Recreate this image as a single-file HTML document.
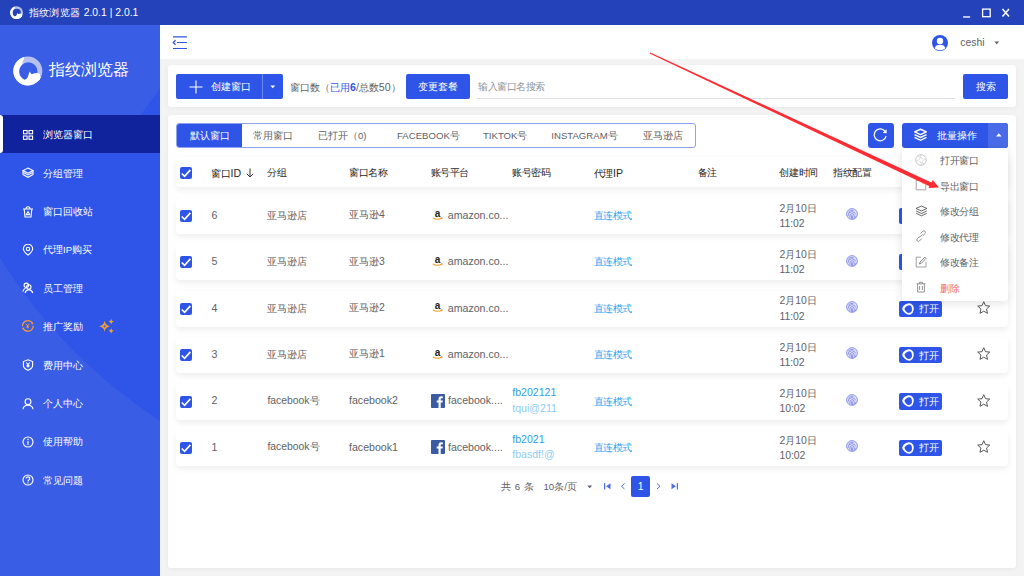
<!DOCTYPE html>
<html><head><meta charset="utf-8">
<style>
*{box-sizing:border-box;margin:0;padding:0}
html,body{width:1024px;height:576px;overflow:hidden}
body{position:relative;background:#f3f3f3;font-family:"Liberation Sans",sans-serif;font-size:9.6px;color:#606266}
.abs{position:absolute}
#title{left:0;top:0;width:1024px;height:25.4px;z-index:5;background:#2442b9;color:#fff}
#side{left:0;top:25px;width:160px;height:551px;background:#2e55e8;overflow:hidden}
#hdr{left:160px;top:25px;width:864px;height:34px;background:#fff}
.card{background:#fff;border-radius:3px;box-shadow:0 1px 4px rgba(0,0,0,0.05)}
.btn{background:#2e55e8;color:#fff;border-radius:2px}
.mi{position:absolute;left:0;width:160px;height:38.4px;color:#fff}
.mi .t{position:absolute;left:43px;top:1.3px;line-height:38.4px;font-size:9.6px}
.mi svg{position:absolute;left:22px;top:13.7px}
.row{position:absolute;left:176px;width:832px;height:36px;background:#fff;border-radius:4px;box-shadow:0 3px 6px rgba(0,0,0,0.07)}
.cell{position:absolute;top:0;line-height:36px;white-space:nowrap}
.cb{position:absolute;left:4px;top:12px;width:12px;height:12px;background:#2e55e8;border-radius:2px}
.th{font-weight:500;color:#262626;margin-top:0.8px;letter-spacing:-0.4px}
.link{color:#2a9fec;letter-spacing:-0.5px}
.l{font-size:10.6px;position:relative;top:-1.2px}
</style></head><body>

<div id="title" class="abs">
 <svg class="abs" style="left:9.9px;top:5.9px" width="13.3" height="13.3" viewBox="0 0 30 30">
  <circle cx="14.8" cy="15" r="14.5" fill="#b7c1ef"/>
  <path d="M11.3 0.93 A14.5 14.5 0 1 0 28.05 20.9 L20 19 L7.9 12.4Z" fill="#fff"/>
  <circle cx="15.3" cy="15.5" r="9.2" fill="#2442b9"/>
  <path d="M9.7 24.4 Q14 23.6 15 20.5 Q15.8 18 16.6 15.6 L18.6 18.3 Q21.5 17 24.5 17 L27 18 L27 24 L12 27Z" fill="#fff"/>
 </svg>
 <div class="abs" style="left:28.5px;top:0;line-height:25px;font-size:10.4px;color:#fff"><span style="letter-spacing:0.45px">指纹浏览器</span> 2.0.1 | 2.0.1</div>
 <svg class="abs" style="left:962px;top:7px" width="50" height="12" viewBox="0 0 50 12">
  <rect x="1.1" y="9.1" width="7" height="1.7" fill="#fff" opacity="0.8"/>
  <rect x="20.6" y="2.1" width="7.6" height="7.6" fill="none" stroke="#fff" stroke-width="1.3"/>
  <path d="M40.5 2 L47 9.5 M47 2 L40.5 9.5" stroke="#fff" stroke-width="1.5"/>
 </svg>
</div>

<div id="side" class="abs">
 <svg class="abs" style="left:0;top:0" width="160" height="551" viewBox="0 0 160 551">
  <path d="M0 0 H160 V64 Q135 95 118 128 L0 128Z" fill="#3a5de6"/>
  <path d="M0 233 Q60 330 160 396 V551 H0Z" fill="#3a5de6"/>
 </svg>
 <svg class="abs" style="left:12.5px;top:30.5px" width="30" height="30" viewBox="0 0 30 30">
  <circle cx="14.8" cy="15" r="14.5" fill="#b7c1ef"/>
  <path d="M11.3 0.93 A14.5 14.5 0 1 0 28.05 20.9 L20 19 L7.9 12.4Z" fill="#fff"/>
  <circle cx="15.3" cy="15.5" r="9.2" fill="#3a5de6"/>
  <path d="M9.7 24.4 Q14 23.6 15 20.5 Q15.8 18 16.6 15.6 L18.6 18.3 Q21.5 17 24.5 17 L27 18 L27 24 L12 27Z" fill="#fff"/>
 </svg>
 <div class="abs" style="left:49px;top:32px;line-height:25px;font-size:16px;color:#fff;letter-spacing:0px">指纹浏览器</div>
 <div class="abs" style="left:0;top:90px;width:160px;height:38px;background:#10229c"></div>
 <div class="abs" style="left:0;top:90px;width:3px;height:38px;background:#fff;border-radius:0 3px 3px 0"></div>
 <div class="mi" style="top:90.0px"><svg class="abs" style="left:22.3px;top:13.8px" width="12" height="12" viewBox="0 0 12 12"><rect x="1.5" y="1.5" width="3.6" height="3.3" stroke="#fff" fill="none" stroke-width="1.1" stroke-width="1.3"/><rect x="7" y="1.5" width="3.6" height="3.3" stroke="#fff" fill="none" stroke-width="1.1" stroke-width="1.3"/><rect x="1.5" y="7" width="3.6" height="3.3" stroke="#fff" fill="none" stroke-width="1.1" stroke-width="1.3"/><rect x="7" y="7" width="3.6" height="3.3" stroke="#fff" fill="none" stroke-width="1.1" stroke-width="1.3"/></svg><span class="t">浏览器窗口</span></div>
 <div class="mi" style="top:128.4px"><svg class="abs" style="left:22.3px;top:13.8px" width="12" height="12" viewBox="0 0 12 12"><path d="M6 1 L11 3.6 L6 6.2 L1 3.6Z" stroke="#fff" fill="none" stroke-width="1.1"/><path d="M1.3 5.6 L6 8 L10.7 5.6" stroke="#fff" fill="none" stroke-width="1.1"/><path d="M1.3 7.8 L6 10.3 L10.7 7.8" stroke="#fff" fill="none" stroke-width="1.1"/><path d="M1 3.6 L1 8 M11 3.6 L11 8" stroke="#fff" fill="none" stroke-width="1.1"/></svg><span class="t">分组管理</span></div>
 <div class="mi" style="top:166.8px"><svg class="abs" style="left:22.3px;top:13.8px" width="12" height="12" viewBox="0 0 12 12"><path d="M1 3 H11 M4 3 Q4 0.8 6 0.8 Q8 0.8 8 3 M2.2 3 L3 11 H9 L9.8 3" stroke="#fff" fill="none" stroke-width="1.1"/><path d="M4.3 8.6 L6 5.6 L7.7 8.6Z" stroke="#fff" fill="none" stroke-width="1.1" stroke-width="0.8"/></svg><span class="t">窗口回收站</span></div>
 <div class="mi" style="top:205.2px"><svg class="abs" style="left:22.3px;top:13.8px" width="12" height="12" viewBox="0 0 12 12"><path d="M6 11.2 Q1.3 7 1.3 4.9 A4.7 4.7 0 0 1 10.7 4.9 Q10.7 7 6 11.2Z" stroke="#fff" fill="none" stroke-width="1.1"/><circle cx="6" cy="4.9" r="1.7" stroke="#fff" fill="none" stroke-width="1.1"/></svg><span class="t">代理IP购买</span></div>
 <div class="mi" style="top:243.6px"><svg class="abs" style="left:22.3px;top:13.8px" width="12" height="12" viewBox="0 0 12 12"><circle cx="4.3" cy="3.3" r="2.2" stroke="#fff" fill="none" stroke-width="1.1"/><circle cx="6.8" cy="5" r="2.2" stroke="#fff" fill="none" stroke-width="1.1"/><path d="M0.8 9.5 Q2 6.5 3.5 6 M3 11 Q4.3 7.6 6.8 7.6 Q9.5 7.6 10.8 11" stroke="#fff" fill="none" stroke-width="1.1"/></svg><span class="t">员工管理</span></div>
 <div class="mi" style="top:282.0px"><svg class="abs" style="left:22.3px;top:13.2px" width="13" height="12" viewBox="0 0 13 12"><g stroke="#f29a38" fill="none" stroke-width="1.25" stroke-linecap="round"><path d="M0.5 5.6 A5.4 5.4 0 0 1 10.4 3.2"/><path d="M11.2 6.2 A5.4 5.4 0 0 1 1.1 8.4"/></g><circle cx="10.4" cy="3.4" r="0.9" fill="#f29a38"/><circle cx="1.1" cy="8.3" r="0.9" fill="#f29a38"/><path d="M4.1 3.8 L5.7 5.8 L7.3 3.8 M5.7 5.8 V8.3 M4.6 6.3 H6.8 M4.6 7.3 H6.8" stroke="#f29a38" fill="none" stroke-width="1"/></svg><span class="t">推广奖励</span></div>
 <div class="mi" style="top:320.4px"><svg class="abs" style="left:22.3px;top:13.8px" width="12" height="12" viewBox="0 0 12 12"><path d="M6 0.8 L10.6 2.6 V6.5 Q10.6 9.3 6 11.3 Q1.4 9.3 1.4 6.5 V2.6Z" stroke="#fff" fill="none" stroke-width="1.1"/><path d="M4.3 3.5 L6 5.5 L7.7 3.5 M6 5.5 V8.5 M4.6 6.2 H7.4 M4.6 7.3 H7.4" stroke="#fff" fill="none" stroke-width="1.1" stroke-width="0.8"/></svg><span class="t">费用中心</span></div>
 <div class="mi" style="top:358.8px"><svg class="abs" style="left:22.3px;top:13.8px" width="12" height="12" viewBox="0 0 12 12"><circle cx="6" cy="3.7" r="2.9" stroke="#fff" fill="none" stroke-width="1.1" stroke-width="1.3"/><path d="M1 11.3 Q1.3 7.2 6 7.2 Q10.7 7.2 11 11.3" stroke="#fff" fill="none" stroke-width="1.1" stroke-width="1.3"/></svg><span class="t">个人中心</span></div>
 <div class="mi" style="top:397.2px"><svg class="abs" style="left:22.3px;top:13.8px" width="12" height="12" viewBox="0 0 12 12"><circle cx="6" cy="6" r="5" stroke="#fff" fill="none" stroke-width="1.1"/><path d="M6 5 V9" stroke="#fff" fill="none" stroke-width="1.1" stroke-width="1.3"/><circle cx="6" cy="3.4" r="0.75" fill="#fff"/></svg><span class="t">使用帮助</span></div>
 <div class="mi" style="top:435.6px"><svg class="abs" style="left:22.3px;top:13.8px" width="12" height="12" viewBox="0 0 12 12"><circle cx="6" cy="6" r="5" stroke="#fff" fill="none" stroke-width="1.1"/><path d="M4.2 4.6 Q4.2 2.9 6 2.9 Q7.8 2.9 7.8 4.4 Q7.8 5.4 6.8 5.9 Q6 6.3 6 7.4" stroke="#fff" fill="none" stroke-width="1.1"/><circle cx="6" cy="8.9" r="0.7" fill="#fff"/></svg><span class="t">常见问题</span></div>
 <svg class="abs" style="left:99px;top:294px" width="15" height="15" viewBox="0 0 15 15">
  <path d="M5.6 1.8499999999999996 Q6.3999999999999995 6.45 11.0 7.25 Q6.3999999999999995 8.05 5.6 12.65 Q4.8 8.05 0.1999999999999993 7.25 Q4.8 6.45 5.6 1.8499999999999996Z M5.6 6.1 L6.75 7.25 L5.6 8.4 L4.45 7.25Z" fill="#f5a024" fill-rule="evenodd"/>
  <path d="M12.2 0.0 Q12.7 2.1 14.799999999999999 2.6 Q12.7 3.1 12.2 5.2 Q11.7 3.1 9.6 2.6 Q11.7 2.1 12.2 0.0Z" fill="#f5a024"/>
  <path d="M12.2 9.200000000000001 Q12.7 11.3 14.799999999999999 11.8 Q12.7 12.3 12.2 14.4 Q11.7 12.3 9.6 11.8 Q11.7 11.3 12.2 9.200000000000001Z" fill="#f5a024"/>
 </svg>
</div>

<div id="hdr" class="abs">
 <svg class="abs" style="left:12px;top:10px" width="16" height="14" viewBox="0 0 16 14">
  <path d="M1 1.9 H14.9 M5 7.5 H14.9 M1 13.5 H14.9" stroke="#2e55e8" stroke-width="1.2"/>
  <path d="M3.6 5.2 L1.2 7.5 L3.6 9.8" stroke="#2e55e8" stroke-width="1.2" fill="none"/>
 </svg>
 <svg class="abs" style="left:772px;top:9.6px" width="16" height="16" viewBox="0 0 16 16">
  <circle cx="8" cy="8" r="8" fill="#2e55e8"/>
  <circle cx="8" cy="6" r="3.2" fill="#fff"/>
  <path d="M2.6 13.2 Q3.5 9.8 8 9.8 Q12.5 9.8 13.4 13.2 Q11.2 15.2 8 15.2 Q4.8 15.2 2.6 13.2Z" fill="#fff"/>
 </svg>
 <div class="abs" style="left:800.3px;top:0;line-height:35px;font-size:10.4px;color:#606266">ceshi</div>
 <svg class="abs" style="left:834px;top:16px" width="6" height="4" viewBox="0 0 6 4"><path d="M0.3 0.5 H5.2 L2.75 3.3Z" fill="#606266"/></svg>
</div>

<div class="abs card" style="left:168px;top:65px;width:848px;height:42px"></div>
<div class="abs btn" style="left:176px;top:74px;width:106.5px;height:24.5px">
 <svg class="abs" style="left:12.5px;top:5.5px" width="14" height="14" viewBox="0 0 14 14"><path d="M7 0.5 V13.5 M0.5 7 H13.5" stroke="#fff" stroke-width="1.1"/></svg>
 <div class="abs" style="left:35px;top:0.6px;line-height:24.5px">创建窗口</div>
 <div class="abs" style="left:86.2px;top:0;width:1px;height:24.5px;background:rgba(255,255,255,0.3)"></div>
 <svg class="abs" style="left:94.3px;top:11.2px" width="6" height="4" viewBox="0 0 6 4"><path d="M0.3 0.5 H5.2 L2.75 3.3Z" fill="#fff"/></svg>
</div>
<div class="abs" style="left:290px;top:75px;line-height:24.5px;color:#606266">窗口数（<span style="color:#2e55e8;font-weight:500">已用<span style="font-size:10.6px;font-weight:bold">6</span></span><span style="font-size:10.6px">/</span>总数<span style="font-size:10.6px">50</span>）</div>
<div class="abs btn" style="left:406px;top:74px;width:63.5px;height:24.5px;text-align:center;line-height:25.5px">变更套餐</div>
<div class="abs" style="left:477px;top:74px;width:478px;height:24.5px;border-bottom:1px solid #dcdfe6;line-height:25.5px;color:#909399;letter-spacing:-0.45px;padding-left:1px">输入窗口名搜索</div>
<div class="abs btn" style="left:963px;top:74px;width:45px;height:24.5px;text-align:center;line-height:25.5px">搜索</div>
<div class="abs card" style="left:168px;top:115px;width:848px;height:453px"></div>
<div class="abs" style="left:176px;top:123.3px;width:519.5px;height:24.4px;border:1px solid #8ea2f0;border-radius:3px;overflow:hidden">
 <div class="abs" style="left:-1px;top:-1px;width:66px;height:24px;background:#2e55e8"></div>
 <div class="abs" style="left:12.699999999999989px;top:0px;line-height:24px;color:#fff">默认窗口</div>
 <div class="abs" style="left:76px;top:0px;line-height:24px;color:#606266">常用窗口</div>
 <div class="abs" style="left:141px;top:0px;line-height:24px;color:#606266">已打开（0)</div>
 <div class="abs" style="left:220px;top:0px;line-height:24px;color:#606266">FACEBOOK号</div>
 <div class="abs" style="left:306px;top:0px;line-height:24px;color:#606266">TIKTOK号</div>
 <div class="abs" style="left:374.29999999999995px;top:0px;line-height:24px;color:#606266">INSTAGRAM号</div>
 <div class="abs" style="left:466.4px;top:0px;line-height:24px;color:#606266">亚马逊店</div>
</div>
<div class="abs btn" style="left:868px;top:123.3px;width:25.7px;height:24.4px;border-radius:3px">
 <svg class="abs" style="left:5.3px;top:4.2px" width="15" height="15" viewBox="0 0 15 15"><path d="M12.3 4.6 A6 6 0 1 0 13.1 9.2" stroke="#fff" stroke-width="1.25" fill="none"/><path d="M13.6 2.2 L13.6 6.3 L9.6 6.1Z" fill="#fff"/></svg>
</div>
<div class="abs btn" style="left:902px;top:123.3px;width:106px;height:24.4px;border-radius:3px;overflow:hidden">
 <svg class="abs" style="left:10.8px;top:4.6px" width="15" height="14" viewBox="0 0 15 14"><path d="M7.5 1.2 L13.3 3.9 L7.5 6.6 L1.7 3.9Z" fill="none" stroke="#fff" stroke-width="1.5" stroke-linejoin="round"/><path d="M1.5 6.6 L7.5 9.5 L13.5 6.6" stroke="#fff" stroke-width="1.4" fill="none"/><path d="M1.5 9.4 L7.5 12.3 L13.5 9.4" stroke="#fff" stroke-width="1.4" fill="none"/></svg>
 <div class="abs" style="left:34.6px;top:1px;line-height:24.2px">批量操作</div>
 <div class="abs" style="left:86px;top:0;width:20px;height:24.4px;background:#4a6be8"></div>
 <svg class="abs" style="left:93.6px;top:10.2px" width="6" height="4" viewBox="0 0 6 4"><path d="M0 3.5 H5.6 L2.8 0.2Z" fill="#fff"/></svg>
</div>
<div class="row" style="top:157px;height:30.4px"><div class="cb" style="top:10.2px;left:4px"><svg width="12" height="12" viewBox="0 0 12 12"><path d="M1.7 6.5 L4.6 9.4 L10.4 2.9" stroke="#fff" stroke-width="1.6" fill="none"/></svg></div><div class="cell th" style="left:35.400000000000006px;line-height:30.4px">窗口<span style="font-size:10.6px;letter-spacing:0">ID</span> <svg style="vertical-align:-1px;margin-left:2.5px" width="8" height="10" viewBox="0 0 8 10"><path d="M4 0.5 V9 M0.8 5.8 L4 9 L7.2 5.8" stroke="#333" stroke-width="1" fill="none"/></svg></div><div class="cell th" style="left:91.39999999999998px;line-height:30.4px">分组</div><div class="cell th" style="left:173px;line-height:30.4px">窗口名称</div><div class="cell th" style="left:254.60000000000002px;line-height:30.4px">账号平台</div><div class="cell th" style="left:336.20000000000005px;line-height:30.4px">账号密码</div><div class="cell th" style="left:417.79999999999995px;line-height:30.4px">代理<span style="font-size:10.6px;letter-spacing:0">IP</span></div><div class="cell th" style="left:521.6px;line-height:30.4px">备注</div><div class="cell th" style="left:603.4px;line-height:30.4px">创建时间</div><div class="cell th" style="left:657px;line-height:30.4px">指纹配置</div></div>
<div class="row" style="top:198.0px"><div class="cb" style="left:4px"><svg width="12" height="12" viewBox="0 0 12 12"><path d="M1.7 6.5 L4.6 9.4 L10.4 2.9" stroke="#fff" stroke-width="1.6" fill="none"/></svg></div><div class="cell" style="left:35.4px"><span class="l">6</span></div><div class="cell" style="left:91.4px">亚马逊店</div><div class="cell" style="left:173px;font-size:10px;top:-0.8px">亚马逊<span style="font-size:10.4px">4</span></div><svg class="abs" style="left:256.3px;top:9.6px" width="11" height="13" viewBox="0 0 11 13"><text x="5.5" y="8.5" text-anchor="middle" font-family="Liberation Sans" font-weight="bold" font-size="10" fill="#222">a</text><path d="M1 10 Q5.5 12.5 10 10" stroke="#f39a1e" stroke-width="1.2" fill="none"/><path d="M8.6 9.2 L10.3 9.8 L9.6 11.3" stroke="#f39a1e" stroke-width="0.8" fill="none"/></svg><div class="cell" style="left:271.8px"><span class="l">amazon.co...</span></div><div class="cell link" style="left:417.8px">直连模式</div><div class="abs" style="left:603.4px;top:2.6px;line-height:15.2px;font-size:10.4px;white-space:nowrap">2月10日<br>11:02</div><svg class="abs" style="left:669.6px;top:10.2px" width="12" height="12" viewBox="0 0 12 12"><circle cx="6" cy="6" r="5.4" fill="#dfe2fb" stroke="#858cec" stroke-width="0.9"/><g stroke="#7a82ea" stroke-width="0.8" fill="none"><path d="M2.3 4 Q4.5 1.8 7.5 2.3"/><path d="M2 7.8 Q2.2 4.2 5.5 3.7 Q8.8 3.5 9.8 6.5"/><path d="M3.8 10 Q3.3 6 5.8 5.6 Q8 5.4 8.2 8 Q8.3 9.5 7.8 10.8"/><path d="M5.8 11 Q5.2 8.5 5.9 7.3 Q6.6 8.5 6.4 11"/><path d="M9.8 8.2 Q9.7 9.3 9.2 10"/></g></svg><div class="abs btn" style="left:722.6px;top:9.8px;width:43.3px;height:16.3px;border-radius:2px"><svg class="abs" style="left:3.6px;top:2.1px" width="12" height="12" viewBox="0 0 12 12"><path d="M6.5 0.3 Q9 0 11 2.5 Q12.2 4.5 11.5 7.5 Q10.8 11 8.5 11.6 Q5.5 12.2 2.5 9.5 Q0 7.3 0.2 5.5 Q0.8 2.5 3.5 1.2Z" fill="#fff"/><path d="M2.6 5.6 Q3.3 3.6 6 2.6 Q8.3 1.9 9.2 3.3 Q10.2 5 9.9 7.2 Q9.5 9.4 7.8 9.8 Q6 10.2 4.2 8.7 Q2.3 7 2.6 5.6Z" fill="#2e55e8"/></svg><div class="abs" style="left:20px;top:0.7px;line-height:16.3px">打开</div></div><svg class="abs" style="left:801px;top:10.2px" width="13.5" height="13.5" viewBox="0 0 13 13"><path d="M6.5 0.7 L8.2 4.5 L12.3 4.9 L9.2 7.7 L10.1 11.9 L6.5 9.8 L2.9 11.9 L3.8 7.7 L0.7 4.9 L4.8 4.5Z" stroke="#555" stroke-width="0.95" fill="none" stroke-linejoin="round"/></svg></div>
<div class="row" style="top:244.4px"><div class="cb" style="left:4px"><svg width="12" height="12" viewBox="0 0 12 12"><path d="M1.7 6.5 L4.6 9.4 L10.4 2.9" stroke="#fff" stroke-width="1.6" fill="none"/></svg></div><div class="cell" style="left:35.4px"><span class="l">5</span></div><div class="cell" style="left:91.4px">亚马逊店</div><div class="cell" style="left:173px;font-size:10px;top:-0.8px">亚马逊<span style="font-size:10.4px">3</span></div><svg class="abs" style="left:256.3px;top:9.6px" width="11" height="13" viewBox="0 0 11 13"><text x="5.5" y="8.5" text-anchor="middle" font-family="Liberation Sans" font-weight="bold" font-size="10" fill="#222">a</text><path d="M1 10 Q5.5 12.5 10 10" stroke="#f39a1e" stroke-width="1.2" fill="none"/><path d="M8.6 9.2 L10.3 9.8 L9.6 11.3" stroke="#f39a1e" stroke-width="0.8" fill="none"/></svg><div class="cell" style="left:271.8px"><span class="l">amazon.co...</span></div><div class="cell link" style="left:417.8px">直连模式</div><div class="abs" style="left:603.4px;top:2.6px;line-height:15.2px;font-size:10.4px;white-space:nowrap">2月10日<br>11:02</div><svg class="abs" style="left:669.6px;top:10.2px" width="12" height="12" viewBox="0 0 12 12"><circle cx="6" cy="6" r="5.4" fill="#dfe2fb" stroke="#858cec" stroke-width="0.9"/><g stroke="#7a82ea" stroke-width="0.8" fill="none"><path d="M2.3 4 Q4.5 1.8 7.5 2.3"/><path d="M2 7.8 Q2.2 4.2 5.5 3.7 Q8.8 3.5 9.8 6.5"/><path d="M3.8 10 Q3.3 6 5.8 5.6 Q8 5.4 8.2 8 Q8.3 9.5 7.8 10.8"/><path d="M5.8 11 Q5.2 8.5 5.9 7.3 Q6.6 8.5 6.4 11"/><path d="M9.8 8.2 Q9.7 9.3 9.2 10"/></g></svg><div class="abs btn" style="left:722.6px;top:9.8px;width:43.3px;height:16.3px;border-radius:2px"><svg class="abs" style="left:3.6px;top:2.1px" width="12" height="12" viewBox="0 0 12 12"><path d="M6.5 0.3 Q9 0 11 2.5 Q12.2 4.5 11.5 7.5 Q10.8 11 8.5 11.6 Q5.5 12.2 2.5 9.5 Q0 7.3 0.2 5.5 Q0.8 2.5 3.5 1.2Z" fill="#fff"/><path d="M2.6 5.6 Q3.3 3.6 6 2.6 Q8.3 1.9 9.2 3.3 Q10.2 5 9.9 7.2 Q9.5 9.4 7.8 9.8 Q6 10.2 4.2 8.7 Q2.3 7 2.6 5.6Z" fill="#2e55e8"/></svg><div class="abs" style="left:20px;top:0.7px;line-height:16.3px">打开</div></div><svg class="abs" style="left:801px;top:10.2px" width="13.5" height="13.5" viewBox="0 0 13 13"><path d="M6.5 0.7 L8.2 4.5 L12.3 4.9 L9.2 7.7 L10.1 11.9 L6.5 9.8 L2.9 11.9 L3.8 7.7 L0.7 4.9 L4.8 4.5Z" stroke="#555" stroke-width="0.95" fill="none" stroke-linejoin="round"/></svg></div>
<div class="row" style="top:290.8px"><div class="cb" style="left:4px"><svg width="12" height="12" viewBox="0 0 12 12"><path d="M1.7 6.5 L4.6 9.4 L10.4 2.9" stroke="#fff" stroke-width="1.6" fill="none"/></svg></div><div class="cell" style="left:35.4px"><span class="l">4</span></div><div class="cell" style="left:91.4px">亚马逊店</div><div class="cell" style="left:173px;font-size:10px;top:-0.8px">亚马逊<span style="font-size:10.4px">2</span></div><svg class="abs" style="left:256.3px;top:9.6px" width="11" height="13" viewBox="0 0 11 13"><text x="5.5" y="8.5" text-anchor="middle" font-family="Liberation Sans" font-weight="bold" font-size="10" fill="#222">a</text><path d="M1 10 Q5.5 12.5 10 10" stroke="#f39a1e" stroke-width="1.2" fill="none"/><path d="M8.6 9.2 L10.3 9.8 L9.6 11.3" stroke="#f39a1e" stroke-width="0.8" fill="none"/></svg><div class="cell" style="left:271.8px"><span class="l">amazon.co...</span></div><div class="cell link" style="left:417.8px">直连模式</div><div class="abs" style="left:603.4px;top:2.6px;line-height:15.2px;font-size:10.4px;white-space:nowrap">2月10日<br>11:02</div><svg class="abs" style="left:669.6px;top:10.2px" width="12" height="12" viewBox="0 0 12 12"><circle cx="6" cy="6" r="5.4" fill="#dfe2fb" stroke="#858cec" stroke-width="0.9"/><g stroke="#7a82ea" stroke-width="0.8" fill="none"><path d="M2.3 4 Q4.5 1.8 7.5 2.3"/><path d="M2 7.8 Q2.2 4.2 5.5 3.7 Q8.8 3.5 9.8 6.5"/><path d="M3.8 10 Q3.3 6 5.8 5.6 Q8 5.4 8.2 8 Q8.3 9.5 7.8 10.8"/><path d="M5.8 11 Q5.2 8.5 5.9 7.3 Q6.6 8.5 6.4 11"/><path d="M9.8 8.2 Q9.7 9.3 9.2 10"/></g></svg><div class="abs btn" style="left:722.6px;top:9.8px;width:43.3px;height:16.3px;border-radius:2px"><svg class="abs" style="left:3.6px;top:2.1px" width="12" height="12" viewBox="0 0 12 12"><path d="M6.5 0.3 Q9 0 11 2.5 Q12.2 4.5 11.5 7.5 Q10.8 11 8.5 11.6 Q5.5 12.2 2.5 9.5 Q0 7.3 0.2 5.5 Q0.8 2.5 3.5 1.2Z" fill="#fff"/><path d="M2.6 5.6 Q3.3 3.6 6 2.6 Q8.3 1.9 9.2 3.3 Q10.2 5 9.9 7.2 Q9.5 9.4 7.8 9.8 Q6 10.2 4.2 8.7 Q2.3 7 2.6 5.6Z" fill="#2e55e8"/></svg><div class="abs" style="left:20px;top:0.7px;line-height:16.3px">打开</div></div><svg class="abs" style="left:801px;top:10.2px" width="13.5" height="13.5" viewBox="0 0 13 13"><path d="M6.5 0.7 L8.2 4.5 L12.3 4.9 L9.2 7.7 L10.1 11.9 L6.5 9.8 L2.9 11.9 L3.8 7.7 L0.7 4.9 L4.8 4.5Z" stroke="#555" stroke-width="0.95" fill="none" stroke-linejoin="round"/></svg></div>
<div class="row" style="top:337.2px"><div class="cb" style="left:4px"><svg width="12" height="12" viewBox="0 0 12 12"><path d="M1.7 6.5 L4.6 9.4 L10.4 2.9" stroke="#fff" stroke-width="1.6" fill="none"/></svg></div><div class="cell" style="left:35.4px"><span class="l">3</span></div><div class="cell" style="left:91.4px">亚马逊店</div><div class="cell" style="left:173px;font-size:10px;top:-0.8px">亚马逊<span style="font-size:10.4px">1</span></div><svg class="abs" style="left:256.3px;top:9.6px" width="11" height="13" viewBox="0 0 11 13"><text x="5.5" y="8.5" text-anchor="middle" font-family="Liberation Sans" font-weight="bold" font-size="10" fill="#222">a</text><path d="M1 10 Q5.5 12.5 10 10" stroke="#f39a1e" stroke-width="1.2" fill="none"/><path d="M8.6 9.2 L10.3 9.8 L9.6 11.3" stroke="#f39a1e" stroke-width="0.8" fill="none"/></svg><div class="cell" style="left:271.8px"><span class="l">amazon.co...</span></div><div class="cell link" style="left:417.8px">直连模式</div><div class="abs" style="left:603.4px;top:2.6px;line-height:15.2px;font-size:10.4px;white-space:nowrap">2月10日<br>11:02</div><svg class="abs" style="left:669.6px;top:10.2px" width="12" height="12" viewBox="0 0 12 12"><circle cx="6" cy="6" r="5.4" fill="#dfe2fb" stroke="#858cec" stroke-width="0.9"/><g stroke="#7a82ea" stroke-width="0.8" fill="none"><path d="M2.3 4 Q4.5 1.8 7.5 2.3"/><path d="M2 7.8 Q2.2 4.2 5.5 3.7 Q8.8 3.5 9.8 6.5"/><path d="M3.8 10 Q3.3 6 5.8 5.6 Q8 5.4 8.2 8 Q8.3 9.5 7.8 10.8"/><path d="M5.8 11 Q5.2 8.5 5.9 7.3 Q6.6 8.5 6.4 11"/><path d="M9.8 8.2 Q9.7 9.3 9.2 10"/></g></svg><div class="abs btn" style="left:722.6px;top:9.8px;width:43.3px;height:16.3px;border-radius:2px"><svg class="abs" style="left:3.6px;top:2.1px" width="12" height="12" viewBox="0 0 12 12"><path d="M6.5 0.3 Q9 0 11 2.5 Q12.2 4.5 11.5 7.5 Q10.8 11 8.5 11.6 Q5.5 12.2 2.5 9.5 Q0 7.3 0.2 5.5 Q0.8 2.5 3.5 1.2Z" fill="#fff"/><path d="M2.6 5.6 Q3.3 3.6 6 2.6 Q8.3 1.9 9.2 3.3 Q10.2 5 9.9 7.2 Q9.5 9.4 7.8 9.8 Q6 10.2 4.2 8.7 Q2.3 7 2.6 5.6Z" fill="#2e55e8"/></svg><div class="abs" style="left:20px;top:0.7px;line-height:16.3px">打开</div></div><svg class="abs" style="left:801px;top:10.2px" width="13.5" height="13.5" viewBox="0 0 13 13"><path d="M6.5 0.7 L8.2 4.5 L12.3 4.9 L9.2 7.7 L10.1 11.9 L6.5 9.8 L2.9 11.9 L3.8 7.7 L0.7 4.9 L4.8 4.5Z" stroke="#555" stroke-width="0.95" fill="none" stroke-linejoin="round"/></svg></div>
<div class="row" style="top:383.6px"><div class="cb" style="left:4px"><svg width="12" height="12" viewBox="0 0 12 12"><path d="M1.7 6.5 L4.6 9.4 L10.4 2.9" stroke="#fff" stroke-width="1.6" fill="none"/></svg></div><div class="cell" style="left:35.4px"><span class="l">2</span></div><div class="cell" style="left:91.4px;font-size:10.4px;top:-0.8px">facebook号</div><div class="cell" style="left:173px"><span class="l">facebook2</span></div><svg class="abs" style="left:254.6px;top:10px" width="14" height="14" viewBox="0 0 14 14"><rect width="14" height="14" rx="1" fill="#3a5aa2"/><path d="M9.7 14 V8.6 H11.5 L11.8 6.5 H9.7 V5.2 Q9.7 4.3 10.6 4.3 H11.9 V2.4 Q11.2 2.3 10.2 2.3 Q7.5 2.3 7.5 5 V6.5 H5.7 V8.6 H7.5 V14Z" fill="#fff"/></svg><div class="cell" style="left:272px"><span class="l">facebook....</span></div><div class="abs" style="left:336.2px;top:3px;line-height:14.4px;white-space:nowrap"><div style="color:#2d9fe8"><span class="l">fb202121</span></div><div style="color:#90cdf2"><span class="l">tqui@211</span></div></div><div class="cell link" style="left:417.8px">直连模式</div><div class="abs" style="left:603.4px;top:2.6px;line-height:15.2px;font-size:10.4px;white-space:nowrap">2月10日<br>10:02</div><svg class="abs" style="left:669.6px;top:10.2px" width="12" height="12" viewBox="0 0 12 12"><circle cx="6" cy="6" r="5.4" fill="#dfe2fb" stroke="#858cec" stroke-width="0.9"/><g stroke="#7a82ea" stroke-width="0.8" fill="none"><path d="M2.3 4 Q4.5 1.8 7.5 2.3"/><path d="M2 7.8 Q2.2 4.2 5.5 3.7 Q8.8 3.5 9.8 6.5"/><path d="M3.8 10 Q3.3 6 5.8 5.6 Q8 5.4 8.2 8 Q8.3 9.5 7.8 10.8"/><path d="M5.8 11 Q5.2 8.5 5.9 7.3 Q6.6 8.5 6.4 11"/><path d="M9.8 8.2 Q9.7 9.3 9.2 10"/></g></svg><div class="abs btn" style="left:722.6px;top:9.8px;width:43.3px;height:16.3px;border-radius:2px"><svg class="abs" style="left:3.6px;top:2.1px" width="12" height="12" viewBox="0 0 12 12"><path d="M6.5 0.3 Q9 0 11 2.5 Q12.2 4.5 11.5 7.5 Q10.8 11 8.5 11.6 Q5.5 12.2 2.5 9.5 Q0 7.3 0.2 5.5 Q0.8 2.5 3.5 1.2Z" fill="#fff"/><path d="M2.6 5.6 Q3.3 3.6 6 2.6 Q8.3 1.9 9.2 3.3 Q10.2 5 9.9 7.2 Q9.5 9.4 7.8 9.8 Q6 10.2 4.2 8.7 Q2.3 7 2.6 5.6Z" fill="#2e55e8"/></svg><div class="abs" style="left:20px;top:0.7px;line-height:16.3px">打开</div></div><svg class="abs" style="left:801px;top:10.2px" width="13.5" height="13.5" viewBox="0 0 13 13"><path d="M6.5 0.7 L8.2 4.5 L12.3 4.9 L9.2 7.7 L10.1 11.9 L6.5 9.8 L2.9 11.9 L3.8 7.7 L0.7 4.9 L4.8 4.5Z" stroke="#555" stroke-width="0.95" fill="none" stroke-linejoin="round"/></svg></div>
<div class="row" style="top:430.0px"><div class="cb" style="left:4px"><svg width="12" height="12" viewBox="0 0 12 12"><path d="M1.7 6.5 L4.6 9.4 L10.4 2.9" stroke="#fff" stroke-width="1.6" fill="none"/></svg></div><div class="cell" style="left:35.4px"><span class="l">1</span></div><div class="cell" style="left:91.4px;font-size:10.4px;top:-0.8px">facebook号</div><div class="cell" style="left:173px"><span class="l">facebook1</span></div><svg class="abs" style="left:254.6px;top:10px" width="14" height="14" viewBox="0 0 14 14"><rect width="14" height="14" rx="1" fill="#3a5aa2"/><path d="M9.7 14 V8.6 H11.5 L11.8 6.5 H9.7 V5.2 Q9.7 4.3 10.6 4.3 H11.9 V2.4 Q11.2 2.3 10.2 2.3 Q7.5 2.3 7.5 5 V6.5 H5.7 V8.6 H7.5 V14Z" fill="#fff"/></svg><div class="cell" style="left:272px"><span class="l">facebook....</span></div><div class="abs" style="left:336.2px;top:3px;line-height:14.4px;white-space:nowrap"><div style="color:#2d9fe8"><span class="l">fb2021</span></div><div style="color:#90cdf2"><span class="l">fbasdf!@</span></div></div><div class="cell link" style="left:417.8px">直连模式</div><div class="abs" style="left:603.4px;top:2.6px;line-height:15.2px;font-size:10.4px;white-space:nowrap">2月10日<br>10:02</div><svg class="abs" style="left:669.6px;top:10.2px" width="12" height="12" viewBox="0 0 12 12"><circle cx="6" cy="6" r="5.4" fill="#dfe2fb" stroke="#858cec" stroke-width="0.9"/><g stroke="#7a82ea" stroke-width="0.8" fill="none"><path d="M2.3 4 Q4.5 1.8 7.5 2.3"/><path d="M2 7.8 Q2.2 4.2 5.5 3.7 Q8.8 3.5 9.8 6.5"/><path d="M3.8 10 Q3.3 6 5.8 5.6 Q8 5.4 8.2 8 Q8.3 9.5 7.8 10.8"/><path d="M5.8 11 Q5.2 8.5 5.9 7.3 Q6.6 8.5 6.4 11"/><path d="M9.8 8.2 Q9.7 9.3 9.2 10"/></g></svg><div class="abs btn" style="left:722.6px;top:9.8px;width:43.3px;height:16.3px;border-radius:2px"><svg class="abs" style="left:3.6px;top:2.1px" width="12" height="12" viewBox="0 0 12 12"><path d="M6.5 0.3 Q9 0 11 2.5 Q12.2 4.5 11.5 7.5 Q10.8 11 8.5 11.6 Q5.5 12.2 2.5 9.5 Q0 7.3 0.2 5.5 Q0.8 2.5 3.5 1.2Z" fill="#fff"/><path d="M2.6 5.6 Q3.3 3.6 6 2.6 Q8.3 1.9 9.2 3.3 Q10.2 5 9.9 7.2 Q9.5 9.4 7.8 9.8 Q6 10.2 4.2 8.7 Q2.3 7 2.6 5.6Z" fill="#2e55e8"/></svg><div class="abs" style="left:20px;top:0.7px;line-height:16.3px">打开</div></div><svg class="abs" style="left:801px;top:10.2px" width="13.5" height="13.5" viewBox="0 0 13 13"><path d="M6.5 0.7 L8.2 4.5 L12.3 4.9 L9.2 7.7 L10.1 11.9 L6.5 9.8 L2.9 11.9 L3.8 7.7 L0.7 4.9 L4.8 4.5Z" stroke="#555" stroke-width="0.95" fill="none" stroke-linejoin="round"/></svg></div>
<div class="abs" style="left:501px;top:476px;line-height:21px;color:#606266;word-spacing:1px">共 6 条</div>
<div class="abs" style="left:543.5px;top:476px;line-height:21px;color:#606266">10条/页</div>
<svg class="abs" style="left:587px;top:484.5px" width="6" height="4" viewBox="0 0 6 4"><path d="M0.3 0.5 H5.2 L2.75 3.3Z" fill="#606266"/></svg>
<svg class="abs" style="left:603px;top:482px" width="80" height="9" viewBox="0 0 80 9">
 <g fill="#2e55e8" opacity="0.85"><rect x="1" y="1" width="1.2" height="6.5"/><path d="M7.5 1.2 V7.3 L3 4.25Z"/></g>
 <path d="M21.5 1.5 L18.5 4.25 L21.5 7" stroke="#2e55e8" stroke-width="1" fill="none" opacity="0.85"/>
 <path d="M54 1.5 L57 4.25 L54 7" stroke="#2e55e8" stroke-width="1" fill="none" opacity="0.85"/>
 <g fill="#2e55e8" opacity="0.85"><rect x="73.8" y="1" width="1.2" height="6.5"/><path d="M68.5 1.2 V7.3 L73 4.25Z"/></g>
</svg>
<div class="abs btn" style="left:631.2px;top:476px;width:19px;height:21px;border-radius:2px;text-align:center;line-height:21px;font-size:10.4px">1</div>
<div class="abs" style="left:902px;top:148px;width:106px;height:153px;background:#fff;border-radius:3px;box-shadow:0 2px 10px rgba(0,0,0,0.12)">
 <div class="abs" style="left:38px;top:5.0px;line-height:16px;color:#606266;letter-spacing:-0.35px">打开窗口</div>
 <svg class="abs" style="left:13px;top:5.9px" width="12" height="12" viewBox="0 0 12 12"><circle cx="6" cy="6" r="5.3" stroke="#bbb" stroke-width="0.8" fill="none"/><g stroke="#ccc" stroke-width="0.6"><path d="M6 0.7 L4 6 M11.3 6 L6 4 M6 11.3 L8 6 M0.7 6 L6 8 M2.3 2.3 L7 3.5 M9.7 9.7 L5 8.5"/></g></svg>
 <div class="abs" style="left:38px;top:30.5px;line-height:16px;color:#606266;letter-spacing:-0.35px">导出窗口</div>
 <svg class="abs" style="left:13px;top:31.4px" width="12" height="12" viewBox="0 0 12 12"><path d="M6.5 1.5 H1.2 V10.8 H10.8 V5.5" stroke="#999" stroke-width="0.9" fill="none"/><path d="M7.5 4.8 L10.6 1.7" stroke="#aaa" stroke-width="0.8"/></svg>
 <div class="abs" style="left:38px;top:56.0px;line-height:16px;color:#606266;letter-spacing:-0.35px">修改分组</div>
 <svg class="abs" style="left:13px;top:56.9px" width="13" height="12" viewBox="0 0 13 12"><path d="M6.5 1 L12 3.5 L6.5 6 L1 3.5Z" stroke="#555" stroke-width="0.9" fill="none"/><path d="M1.2 6 L6.5 8.5 L11.8 6 M1.2 8.3 L6.5 10.8 L11.8 8.3" stroke="#555" stroke-width="0.9" fill="none"/></svg>
 <div class="abs" style="left:38px;top:81.5px;line-height:16px;color:#606266;letter-spacing:-0.35px">修改代理</div>
 <svg class="abs" style="left:13px;top:82.4px" width="12" height="12" viewBox="0 0 12 12"><path d="M4.5 6.5 L2.3 8.7 Q1.2 10 2.4 11 Q3.5 11.9 4.6 10.8 L6.8 8.5 M5.5 3.5 L7.7 1.3 Q8.9 0.2 10 1.3 Q11.1 2.4 10 3.6 L7.7 5.8 M4.4 7.7 L7.6 4.5" stroke="#888" stroke-width="0.9" fill="none"/></svg>
 <div class="abs" style="left:38px;top:107.0px;line-height:16px;color:#606266;letter-spacing:-0.35px">修改备注</div>
 <svg class="abs" style="left:13px;top:107.9px" width="12" height="12" viewBox="0 0 12 12"><path d="M6 1.2 H1.2 V11 H11 V6" stroke="#999" stroke-width="0.9" fill="none"/><path d="M4.5 8 L5 6 L9.8 1.2 L11 2.4 L6.3 7.3Z" stroke="#777" stroke-width="0.9" fill="none"/></svg>
 <div class="abs" style="left:38px;top:132.5px;line-height:16px;color:#f56c6c;letter-spacing:-0.35px">删除</div>
 <svg class="abs" style="left:13px;top:133.4px" width="12" height="12" viewBox="0 0 12 12"><path d="M1.5 2.8 H10.5 M4.5 2.8 V1.3 H7.5 V2.8 M2.6 2.8 V11 H9.4 V2.8 M4.6 5 V9 M7.4 5 V9" stroke="#888" stroke-width="0.9" fill="none"/></svg>
</div>
<svg class="abs" style="left:0;top:0;pointer-events:none" width="1024" height="576" viewBox="0 0 1024 576">
 <path d="M650.3 52.4 L932.5 182.9 L930 186.4 L649.7 53.5Z" fill="#fd2b33"/>
 <path d="M932.8 180 L939 187.6 L928.4 188.1Z" fill="#fd2b33"/>
</svg>

</body></html>
